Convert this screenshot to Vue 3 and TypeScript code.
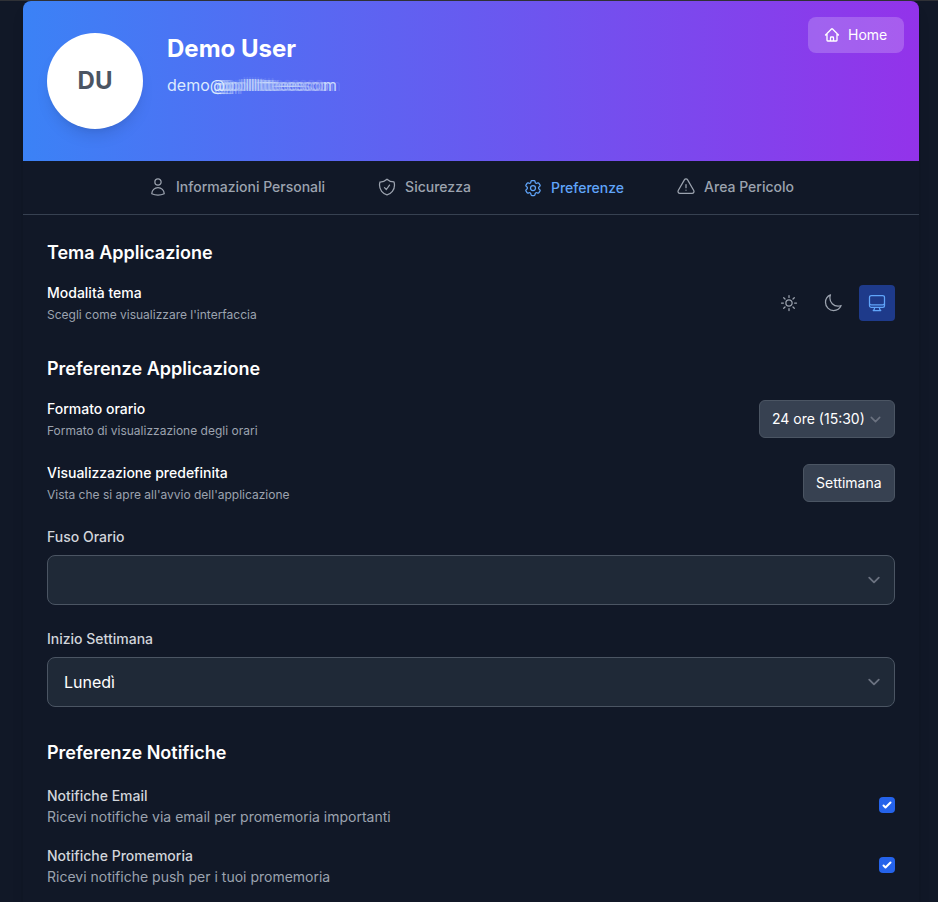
<script setup lang="ts">
import { ref } from 'vue'

interface Tab {
  id: string
  label: string
  paths: string[]
}

const tabs: Tab[] = [
  {
    id: 'personal',
    label: 'Informazioni Personali',
    paths: [
      'M15.75 6a3.75 3.75 0 11-7.5 0 3.75 3.75 0 017.5 0zM4.501 20.118a7.5 7.5 0 0114.998 0A17.933 17.933 0 0112 21.75c-2.676 0-5.216-.584-7.499-1.632z',
    ],
  },
  {
    id: 'security',
    label: 'Sicurezza',
    paths: [
      'M9 12.75L11.25 15 15 9.75m-3-7.036A11.959 11.959 0 013.598 6 11.99 11.99 0 003 9.749c0 5.592 3.824 10.29 9 11.623 5.176-1.332 9-6.03 9-11.622 0-1.31-.21-2.571-.598-3.751h-.152c-3.196 0-6.1-1.248-8.25-3.285z',
    ],
  },
  {
    id: 'preferences',
    label: 'Preferenze',
    paths: [
      'M9.594 3.94c.09-.542.56-.94 1.11-.94h2.593c.55 0 1.02.398 1.11.94l.213 1.281c.063.374.313.686.645.87.074.04.147.083.22.127.324.196.72.257 1.075.124l1.217-.456a1.125 1.125 0 011.37.49l1.296 2.247a1.125 1.125 0 01-.26 1.431l-1.003.827c-.293.24-.438.613-.431.992a6.759 6.759 0 010 .255c-.007.378.138.75.43.99l1.005.828c.424.35.534.954.26 1.43l-1.298 2.247a1.125 1.125 0 01-1.369.491l-1.217-.456c-.355-.133-.75-.072-1.076.124a6.57 6.57 0 01-.22.128c-.331.183-.581.495-.644.869l-.213 1.28c-.09.543-.56.941-1.11.941h-2.594c-.55 0-1.02-.398-1.11-.94l-.213-1.281c-.062-.374-.312-.686-.644-.87a6.52 6.52 0 01-.22-.127c-.325-.196-.72-.257-1.076-.124l-1.217.456a1.125 1.125 0 01-1.369-.49l-1.297-2.247a1.125 1.125 0 01.26-1.431l1.004-.827c.292-.24.437-.613.43-.992a6.932 6.932 0 010-.255c.007-.378-.138-.75-.43-.99l-1.004-.828a1.125 1.125 0 01-.26-1.43l1.297-2.247a1.125 1.125 0 011.37-.491l1.216.456c.356.133.751.072 1.076-.124.072-.044.146-.087.22-.128.332-.183.582-.495.644-.869l.214-1.281z',
      'M15 12a3 3 0 11-6 0 3 3 0 016 0z',
    ],
  },
  {
    id: 'danger',
    label: 'Area Pericolo',
    paths: [
      'M12 9v3.75m-9.303 3.376c-.866 1.5.217 3.374 1.948 3.374h14.71c1.73 0 2.813-1.874 1.948-3.374L13.949 3.378c-.866-1.5-3.032-1.5-3.898 0L2.697 16.126zM12 15.75h.007v.008H12v-.008z',
    ],
  },
]

const themes = [
  {
    id: 'light',
    path: 'M12 3v2.25m6.364.386l-1.591 1.591M21 12h-2.25m-.386 6.364l-1.591-1.591M12 18.75V21m-4.773-4.227l-1.591 1.591M5.25 12H3m4.227-4.773L5.636 5.636M15.75 12a3.75 3.75 0 11-7.5 0 3.75 3.75 0 017.5 0z',
  },
  {
    id: 'dark',
    path: 'M21.752 15.002A9.718 9.718 0 0118 15.75c-5.385 0-9.75-4.365-9.75-9.75 0-1.33.266-2.597.748-3.752A9.753 9.753 0 003 11.25C3 16.635 7.365 21 12.75 21a9.753 9.753 0 009.002-5.998z',
  },
  {
    id: 'system',
    path: 'M9 17.25v1.007a3 3 0 01-.879 2.122L7.5 21h9l-.621-.621A3 3 0 0115 18.257V17.25m6-12V15a2.25 2.25 0 01-2.25 2.25H5.25A2.25 2.25 0 013 15V5.25m18 0A2.25 2.25 0 0018.75 3H5.25A2.25 2.25 0 003 5.25m18 0V12a2.25 2.25 0 01-2.25 2.25H5.25A2.25 2.25 0 013 12V5.25',
  },
]

const activeTab = ref('preferences')
const theme = ref('system')

const notifications = ref([
  { title: 'Notifiche Email', hint: 'Ricevi notifiche via email per promemoria importanti', on: true },
  { title: 'Notifiche Promemoria', hint: 'Ricevi notifiche push per i tuoi promemoria', on: true },
])
</script>

<template>
  <div class="page">
    <main class="card">
      <header class="hero">
        <div class="avatar">DU</div>
        <div class="identity">
          <h1>Demo User</h1>
          <p class="email">demo<span class="at">@</span><span class="masked">pplllllltttteeesco</span><span class="tail">m</span></p>
        </div>
        <button class="home">
          <svg class="icon small" viewBox="0 0 24 24">
            <path d="M2.25 12l8.954-8.955c.44-.439 1.152-.439 1.591 0L21.75 12M4.5 9.75v10.125c0 .621.504 1.125 1.125 1.125H9.75v-4.875c0-.621.504-1.125 1.125-1.125h2.25c.621 0 1.125.504 1.125 1.125V21h4.125c.621 0 1.125-.504 1.125-1.125V9.75M8.25 21h8.25" />
          </svg>
          Home
        </button>
      </header>

      <nav class="tabs">
        <button
          v-for="t in tabs"
          :key="t.id"
          class="tab"
          :class="{ active: t.id === activeTab }"
          @click="activeTab = t.id"
        >
          <svg class="icon" viewBox="0 0 24 24">
            <path v-for="p in t.paths" :key="p" :d="p" />
          </svg>
          {{ t.label }}
        </button>
      </nav>

      <div class="content">
        <section class="theme-section">
          <h2>Tema Applicazione</h2>
          <div class="row">
            <div>
              <div class="title">Modalità tema</div>
              <div class="hint">Scegli come visualizzare l'interfaccia</div>
            </div>
            <div class="theme-buttons">
              <button
                v-for="m in themes"
                :key="m.id"
                class="theme-button"
                :class="{ active: m.id === theme }"
                @click="theme = m.id"
              >
                <svg class="icon" viewBox="0 0 24 24"><path :d="m.path" /></svg>
              </button>
            </div>
          </div>
        </section>

        <section class="app-section">
          <h2>Preferenze Applicazione</h2>
          <div class="row">
            <div>
              <div class="title">Formato orario</div>
              <div class="hint">Formato di visualizzazione degli orari</div>
            </div>
            <div class="compact">
              24 ore (15:30)
              <svg class="chevron" viewBox="0 0 20 20"><path d="M6 8l4 4 4-4" /></svg>
            </div>
          </div>
          <div class="row second">
            <div>
              <div class="title">Visualizzazione predefinita</div>
              <div class="hint">Vista che si apre all'avvio dell'applicazione</div>
            </div>
            <div class="compact plain">Settimana</div>
          </div>
          <div class="field">
            <div class="label">Fuso Orario</div>
            <div class="select">
              <span></span>
              <svg class="chevron" viewBox="0 0 20 20"><path d="M6 8l4 4 4-4" /></svg>
            </div>
          </div>
          <div class="field">
            <div class="label">Inizio Settimana</div>
            <div class="select">
              <span>Lunedì</span>
              <svg class="chevron" viewBox="0 0 20 20"><path d="M6 8l4 4 4-4" /></svg>
            </div>
          </div>
        </section>

        <section class="notify-section">
          <h2>Preferenze Notifiche</h2>
          <div v-for="n in notifications" :key="n.title" class="row notify">
            <div class="notify-text">
              <div class="label-line">{{ n.title }}</div>
              <div class="description">{{ n.hint }}</div>
            </div>
            <button class="checkbox" :class="{ on: n.on }" @click="n.on = !n.on">
              <svg v-if="n.on" viewBox="0 0 16 16">
                <path d="M12.207 4.793a1 1 0 010 1.414l-5 5a1 1 0 01-1.414 0l-2-2a1 1 0 011.414-1.414L6.5 9.086l4.293-4.293a1 1 0 011.414 0z" />
              </svg>
            </button>
          </div>
        </section>
      </div>
    </main>
  </div>
</template>

<style>
body {
  background: #111827;
}
</style>

<style scoped>
.page {
  box-sizing: border-box;
  height: 902px;
  overflow: hidden;
  border-top: 1px solid #2f3136;
  padding: 0 19px 0 23px;
  background: #111827;
  font-family: Inter, sans-serif;
  font-size: 16px;
  line-height: 24px;
  color: #fff;
}
.page * {
  box-sizing: border-box;
}
h1,
h2,
p {
  margin: 0;
}
button {
  border: 0;
  padding: 0;
  background: none;
  font: inherit;
  color: inherit;
}
.card {
  min-height: 960px;
  border-radius: 8px;
  background: #111827;
  box-shadow: 0 10px 15px -3px rgba(0, 0, 0, 0.1), 0 4px 6px -4px rgba(0, 0, 0, 0.1);
}
.hero {
  display: flex;
  align-items: flex-start;
  gap: 24px;
  height: 160px;
  padding: 32px 15px 0 24px;
  border-radius: 8px 8px 0 0;
  background: linear-gradient(to right, #3b82f6, #9333ea);
}
.avatar {
  display: flex;
  align-items: center;
  justify-content: center;
  width: 96px;
  height: 96px;
  border-radius: 50%;
  background: #fff;
  color: #4b5563;
  font-size: 24px;
  font-weight: 700;
  box-shadow: 0 10px 15px -3px rgba(0, 0, 0, 0.1), 0 4px 6px -4px rgba(0, 0, 0, 0.1);
}
.identity {
  flex: 1;
}
h1 {
  font-size: 24px;
  line-height: 32px;
  font-weight: 700;
}
.email {
  margin-top: 8px;
  color: #dbeafe;
  white-space: nowrap;
}
.at {
  text-shadow: 3px 0 rgba(219, 234, 254, 0.45), 6px 0 rgba(219, 234, 254, 0.35),
    9px 0 rgba(219, 234, 254, 0.3), 12px 0 rgba(219, 234, 254, 0.25);
}
.masked {
  letter-spacing: -1.12px;
  color: rgba(219, 234, 254, 0.36);
  text-shadow: -3px 0 rgba(219, 234, 254, 0.3), 3px 0 rgba(219, 234, 254, 0.3),
    5px 0 rgba(219, 234, 254, 0.25), -5px 0 rgba(219, 234, 254, 0.2),
    0 -2px 1px rgba(219, 234, 254, 0.15);
}
.tail {
  color: rgba(219, 234, 254, 0.85);
  text-shadow: -3px 0 rgba(219, 234, 254, 0.3), 4px 0 rgba(219, 234, 254, 0.12);
}
.home {
  display: flex;
  align-items: center;
  gap: 8px;
  width: 96px;
  height: 36px;
  margin-top: -16px;
  padding: 0 16px;
  border-radius: 8px;
  background: rgba(255, 255, 255, 0.2);
  font-size: 14px;
  line-height: 20px;
}
.icon {
  display: block;
  flex: none;
  width: 20px;
  height: 20px;
  fill: none;
  stroke: currentColor;
  stroke-width: 1.5;
  stroke-linecap: round;
  stroke-linejoin: round;
}
.icon.small {
  width: 16px;
  height: 16px;
  stroke-width: 2;
}
.tabs {
  display: flex;
  justify-content: center;
  gap: 52px;
  height: 54px;
  border-bottom: 1px solid #374151;
}
.tab {
  display: flex;
  align-items: center;
  gap: 8px;
  height: 52px;
  font-size: 14px;
  line-height: 20px;
  font-weight: 500;
  color: #9ca3af;
}
.tab.active {
  height: 54px;
  color: #60a5fa;
}
.content {
  padding: 24px;
}
h2 {
  font-size: 18px;
  line-height: 28px;
  font-weight: 600;
}
.row {
  display: flex;
  align-items: center;
  justify-content: space-between;
}
.theme-section .row,
.app-section .row {
  height: 40px;
  margin-top: 16px;
}
.app-section .row.second {
  margin-top: 24px;
}
.title,
.label,
.label-line {
  font-size: 14px;
  line-height: 20px;
  font-weight: 500;
}
.label,
.label-line {
  color: #d1d5db;
}
.hint {
  margin-top: 4px;
  font-size: 12px;
  line-height: 16px;
  color: #9ca3af;
}
.theme-buttons {
  display: flex;
  gap: 8px;
}
.theme-button {
  padding: 8px;
  border-radius: 4px;
  color: #9ca3af;
}
.theme-button.active {
  background: #1e3a8a;
  color: #60a5fa;
}
.app-section,
.notify-section {
  margin-top: 32px;
}
.compact {
  display: flex;
  align-items: center;
  justify-content: space-between;
  width: 136px;
  height: 38px;
  padding: 0 8px 0 12px;
  border: 1px solid #4b5563;
  border-radius: 6px;
  background: #374151;
  font-size: 14px;
  line-height: 20px;
  white-space: nowrap;
}
.compact .chevron {
  width: 21px;
  height: 21px;
}
.compact.plain {
  width: 92px;
  padding: 0 12px;
}
.chevron {
  flex: none;
  width: 24px;
  height: 24px;
  fill: none;
  stroke: #6b7280;
  stroke-width: 1.5;
  stroke-linecap: round;
  stroke-linejoin: round;
}
.field {
  margin-top: 24px;
}
.select {
  display: flex;
  align-items: center;
  justify-content: space-between;
  height: 50px;
  margin-top: 8px;
  padding: 0 8px 0 16px;
  border: 1px solid #4b5563;
  border-radius: 8px;
  background: #1f2937;
}
.notify {
  height: 44px;
  margin-top: 16px;
}
.notify-text {
  padding-top: 3px;
}
.description {
  margin-top: 1px;
  font-size: 14px;
  line-height: 20px;
  color: #9ca3af;
}
.checkbox {
  width: 16px;
  height: 16px;
  border: 1px solid #4b5563;
  border-radius: 4px;
}
.checkbox.on {
  border: 0;
  background: #2563eb;
}
.checkbox svg {
  display: block;
  width: 16px;
  height: 16px;
  fill: #fff;
}
</style>
